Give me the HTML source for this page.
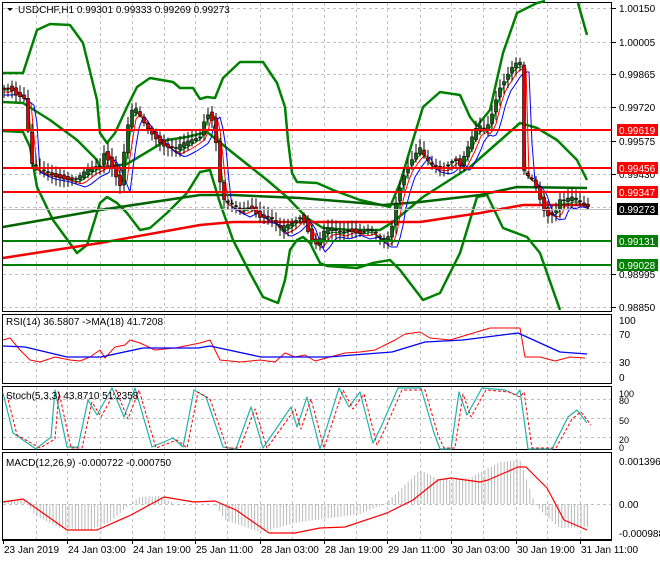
<!DOCTYPE html>
<html><head><meta charset="utf-8"><style>
body{margin:0;background:#fff;width:660px;height:560px;overflow:hidden;font-family:"Liberation Sans",sans-serif}
svg text{font-family:"Liberation Sans",sans-serif;font-size:10px;fill:#000}
</style></head><body>
<svg id="s" width="660" height="560" xmlns="http://www.w3.org/2000/svg">
<rect width="660" height="560" fill="#fff"/>
<g id="grid" stroke="#c0c0c0" stroke-dasharray="3,3" stroke-width="1"></g>
<g fill="none" stroke="#000" stroke-width="1">
<rect x="2.5" y="2.5" width="609" height="309"/>
<rect x="2.5" y="314.5" width="609" height="69"/>
<rect x="2.5" y="386.5" width="609" height="63"/>
<rect x="2.5" y="452.5" width="609" height="87"/>
</g>
<g id="main"></g>
<g id="ind"></g>
<g id="labels"></g>
</svg>
<script>
var NS="http://www.w3.org/2000/svg";
function el(p,t,a,txt){var e=document.createElementNS(NS,t);for(var k in a)e.setAttribute(k,a[k]);if(txt!=null)e.textContent=txt;document.getElementById(p).appendChild(e);return e;}
function pl(p,pts,c,w,d){var a={points:pts.map(function(q){return q.join(',')}).join(' '),fill:'none',stroke:c,'stroke-width':w||1,'stroke-linejoin':'round'};if(d)a['stroke-dasharray']=d;return el(p,'polyline',a);}
var gx=[36,67,100,132,164,195,227,260,292,324,356,387,420,451,483,516,547,580];
gx.forEach(function(x){
 el('grid','line',{x1:x+.5,y1:3,x2:x+.5,y2:311});el('grid','line',{x1:x+.5,y1:315,x2:x+.5,y2:383});
 el('grid','line',{x1:x+.5,y1:387,x2:x+.5,y2:449});el('grid','line',{x1:x+.5,y1:453,x2:x+.5,y2:539});});
[8,42,74,107,141,174,207,241,274,307].forEach(function(y){el('grid','line',{x1:3,y1:y+.5,x2:611,y2:y+.5});});
[334,362].forEach(function(y){el('grid','line',{x1:3,y1:y+.5,x2:611,y2:y+.5});});
[399,418,437].forEach(function(y){el('grid','line',{x1:3,y1:y+.5,x2:611,y2:y+.5});});
el('grid','line',{x1:3,y1:504.5,x2:611,y2:504.5});
var C=[[4,88],[10,85],[15,92],[20,95],[26,100],[30,165],[40,170],[45,172],[60,175],[75,180],[80,178],[90,170],[100,165],[103,150],[110,160],[120,185],[125,145],[130,115],[135,110],[145,125],[155,135],[165,145],[175,150],[185,145],[193,140],[200,135],[205,115],[210,110],[215,130],[218,165],[222,200],[230,205],[240,210],[250,205],[260,215],[270,218],[280,230],[290,225],[300,215],[305,220],[310,235],[315,245],[320,240],[325,232],[330,230],[340,232],[350,228],[360,232],[370,230],[380,240],[387,240],[392,225],[395,205],[400,185],[405,170],[410,162],[415,155],[420,150],[425,160],[430,165],[440,167],[445,165],[450,160],[455,157],[460,165],[470,145],[475,132],[480,128],[485,130],[490,120],[495,100],[500,85],[505,78],[510,70],[515,65],[520,65],[523,172],[528,178],[532,180],[538,190],[542,205],[548,213],[555,212],[560,200],[565,202],[570,200],[575,200],[580,203],[587,205]];
function at(x){if(x<=C[0][0])return C[0][1];for(var i=1;i<C.length;i++){if(x<=C[i][0]){var a=C[i-1],b=C[i];return a[1]+(b[1]-a[1])*(x-a[0])/(b[0]-a[0]);}}return C[C.length-1][1];}
pl('main',[[3,73],[23,73],[37,30],[50,24],[70,25],[83,43],[97,100],[100,133],[107,143],[115,133],[127,107],[137,87],[150,78],[173,82],[180,88],[193,88],[200,99],[207,97],[215,98],[223,78],[240,62],[263,62],[277,83],[285,107],[288,140],[292,173],[297,182],[317,183],[333,190],[360,200],[390,207],[400,183],[413,140],[423,107],[440,92],[460,95],[470,117],[477,126],[490,110],[503,53],[517,13],[537,3],[545,1]],'#008000',2.5);
pl('main',[[578,3],[587,35]],'#008000',2.5);
pl('main',[[3,131],[23,132],[30,147],[37,187],[53,220],[77,253],[87,245],[100,203],[107,197],[117,203],[127,213],[140,230],[150,228],[167,213],[180,200],[187,193],[200,172],[210,170],[220,203],[233,240],[250,273],[263,297],[278,303],[285,280],[290,250],[297,240],[303,237],[310,243],[320,263],[327,266],[357,268],[373,263],[390,260],[400,270],[413,287],[423,300],[440,293],[460,253],[477,197],[487,195],[503,228],[527,237],[540,253],[560,310]],'#008000',2.5);
pl('main',[[3,102],[23,103],[50,120],[77,140],[97,160],[100,168],[127,164],[167,140],[187,137],[207,132],[217,140],[233,153],[267,180],[287,197],[307,218],[323,228],[350,230],[380,230],[393,222],[423,197],[470,167],[520,123],[537,128],[557,140],[577,160],[587,180]],'#008000',2.5);
pl('main',[[3,227],[100,210],[200,195],[233,195],[300,198],[350,202],[383,205],[420,202],[480,195],[517,187],[587,188]],'#006400',2.5);
pl('main',[[3,258],[100,243],[200,225],[233,222],[420,222],[480,213],[523,205],[587,205]],'#f00000',2.5);
var r=[],b=[],g=[];
for(var x=4;x<=590;x+=3){r.push([x,at(x-6)+4]);b.push([x,at(x-10)+7]);g.push([x,at(x-3)+2]);}
pl('main',g,'#008000',1);pl('main',r,'#ff0000',1);pl('main',b,'#0000ff',1);
for(var x=4;x<=588;x+=4){var o=at(x-4),c=at(x)+(Math.sin(x*1.7)*3);var t=Math.min(o,c)-2-Math.abs(Math.sin(x*3.1))*7,bt=Math.max(o,c)+2+Math.abs(Math.cos(x*2.3))*7;
 el('main','line',{x1:x,y1:t,x2:x,y2:bt,stroke:'#000','stroke-width':1});
 var up=c<o;el('main','rect',{x:x-1.5,y:Math.min(o,c),width:3,height:Math.max(1,Math.abs(o-c)),fill:up?'#116611':'#e00000',stroke:'#000','stroke-width':.6});}
[[130,'#f00'],[168,'#f00'],[192,'#f00'],[241,'#008000'],[265,'#008000']].forEach(function(l){el('main','line',{x1:3,y1:l[0],x2:611,y2:l[0],stroke:l[1],'stroke-width':2});});
el('main','line',{x1:3,y1:209.5,x2:611,y2:209.5,stroke:'#c0c0c0','stroke-width':1});
el('labels','path',{d:'M7 8 L13 8 L10 11 Z',fill:'#000'});
el('labels','text',{x:18,y:13},'USDCHF,H1  0.99301 0.99333 0.99269 0.99273');
[[8,'1.00150'],[42,'1.00005'],[74,'0.99865'],[107,'0.99720'],[141,'0.99575'],[174,'0.99430'],[274,'0.98995'],[307,'0.98850']].forEach(function(p){el('labels','line',{x1:612,y1:p[0]+.5,x2:616,y2:p[0]+.5,stroke:'#000'});el('labels','text',{x:619,y:p[0]+4},p[1]);});
[[130,'#ff0000','0.99619'],[168,'#ff0000','0.99456'],[192,'#ff0000','0.99347'],[209,'#000','0.99273'],[241,'#008000','0.99131'],[265,'#008000','0.99028']].forEach(function(p){el('labels','rect',{x:617,y:p[0]-6,width:41,height:12,fill:p[1]});el('labels','text',{x:619,y:p[0]+4,style:'fill:#fff'},p[2]);});
el('labels','text',{x:6,y:325},'RSI(14) 36.5807  ->MA(18) 41.7208');
[[320,'100'],[334,'70'],[362,'30'],[377,'0']].forEach(function(p){el('labels','text',{x:619,y:p[0]+4},p[1]);});
pl('ind',[[3,340],[10,338],[20,350],[30,360],[40,362],[55,357],[70,360],[80,361],[90,357],[100,350],[105,358],[115,347],[125,345],[130,340],[140,343],[155,350],[175,348],[190,345],[200,343],[210,340],[220,360],[240,362],[260,360],[275,362],[285,353],[295,357],[305,355],[315,361],[330,357],[345,353],[360,352],[375,350],[385,345],[395,340],[405,334],[420,332],[430,338],[450,340],[470,334],[490,328],[510,328],[520,328],[525,357],[540,357],[555,361],[570,357],[585,358]],'#ff0000',1);
pl('ind',[[3,346],[25,347],[67,357],[101,357],[143,348],[198,348],[210,346],[261,357],[328,357],[392,352],[425,342],[463,340],[518,333],[560,352],[587,354]],'#0000ff',1.3);
el('labels','text',{x:6,y:399},'Stoch(5,3,3) 43.8710 51.2358');
[[394,'100'],[401,'80'],[421,'50'],[440,'20'],[448,'0']].forEach(function(p){el('labels','text',{x:619,y:p[0]+3,style:'font-size:9px'},p[1]);});
var st=[[3,393],[13,433],[36,449],[51,437],[55,390],[67,447],[78,447],[88,400],[97,415],[112,388],[124,417],[135,388],[152,447],[173,438],[183,447],[194,390],[206,397],[223,447],[236,449],[251,407],[263,448],[291,407],[297,427],[307,397],[320,449],[339,388],[349,407],[360,392],[373,443],[381,427],[398,388],[421,388],[434,433],[440,449],[451,449],[459,392],[467,415],[482,388],[505,390],[516,395],[520,390],[528,449],[552,449],[568,417],[577,410],[587,423]];
pl('ind',st,'#20b2aa',1.2);
pl('ind',st.map(function(q){return [q[0]+4,Math.min(448,q[1]+2)]}),'#ff0000',1,'3,2');
el('labels','text',{x:6,y:466},'MACD(12,26,9) -0.000722 -0.000750');
[[461,'0.001396'],[504,'0.00'],[533,'-0.000988']].forEach(function(p){el('labels','text',{x:619,y:p[0]+4},p[1]);});
var hv=[[3,500],[25,500],[35,515],[60,528],[90,530],[110,522],[130,504],[140,497],[160,496],[175,504],[215,504],[225,520],[260,532],[300,522],[360,514],[385,504],[400,490],[420,470],[440,480],[470,478],[500,462],[520,460],[535,504],[545,515],[560,528],[587,527]];
for(var x=5;x<=588;x+=3.2){var y=null;for(var i=1;i<hv.length;i++){if(x<=hv[i][0]){var a=hv[i-1],bb=hv[i];y=a[1]+(bb[1]-a[1])*(x-a[0])/(bb[0]-a[0]);break;}}if(y==null)y=527;el('ind','line',{x1:x,y1:504,x2:x,y2:y,stroke:'#b8b8b8','stroke-width':1});}
pl('ind',[[3,502],[23,499],[67,530],[97,530],[131,515],[164,497],[194,502],[215,501],[236,510],[269,533],[295,533],[320,528],[345,527],[387,513],[413,500],[438,480],[451,478],[480,482],[488,480],[518,467],[526,467],[547,488],[564,520],[587,530]],'#ff0000',1.2);
el('labels','line',{x1:2,y1:540.5,x2:612,y2:540.5,stroke:'#000'});
[[3,'23 Jan 2019'],[67,'24 Jan 03:00'],[132,'24 Jan 19:00'],[195,'25 Jan 11:00'],[260,'28 Jan 03:00'],[324,'28 Jan 19:00'],[387,'29 Jan 11:00'],[451,'30 Jan 03:00'],[516,'30 Jan 19:00'],[580,'31 Jan 11:00']].forEach(function(p){el('labels','line',{x1:p[0]+.5,y1:540,x2:p[0]+.5,y2:544,stroke:'#000'});el('labels','text',{x:p[0]+1,y:553},p[1]);});
</script>
</body></html>
